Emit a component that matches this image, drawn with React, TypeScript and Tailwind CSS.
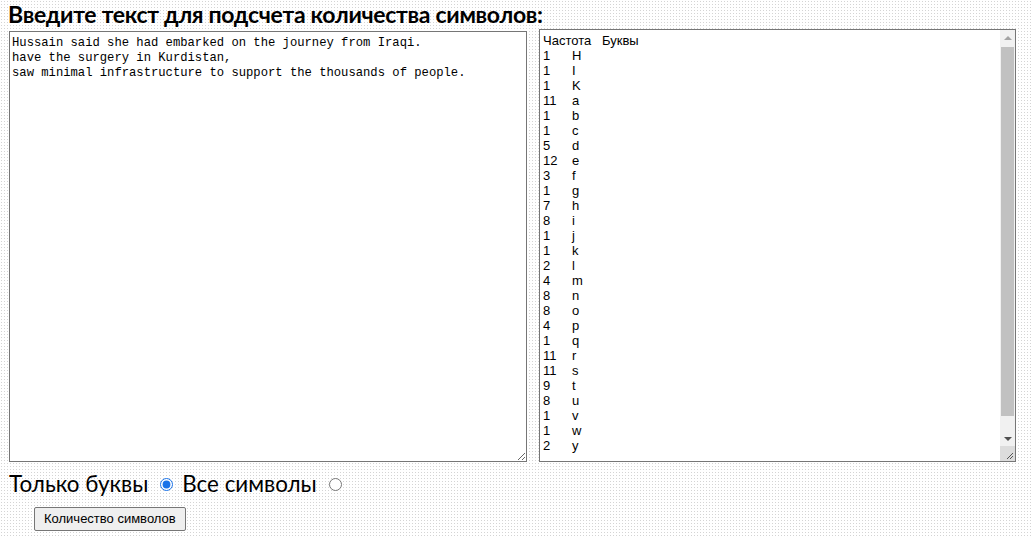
import React from "react";

const rows: [string, string][] = [
  ["1", "H"], ["1", "I"], ["1", "K"], ["11", "a"], ["1", "b"], ["1", "c"], ["5", "d"],
  ["12", "e"], ["3", "f"], ["1", "g"], ["7", "h"], ["8", "i"], ["1", "j"], ["1", "k"],
  ["2", "l"], ["4", "m"], ["8", "n"], ["8", "o"], ["4", "p"], ["1", "q"], ["11", "r"],
  ["11", "s"], ["9", "t"], ["8", "u"], ["1", "v"], ["1", "w"], ["2", "y"],
];

const text =
  "Hussain said she had embarked on the journey from Iraqi.\nhave the surgery in Kurdistan,\nsaw minimal infrastructure to support the thousands of people.";

export default function App() {
  return (
    <div className="w-[1031px] h-[537px] overflow-hidden bg-white bg-[radial-gradient(circle,#d4d4d4_0.6px,transparent_0.8px)] bg-[size:3px_3px] text-black">
      <h1 className="pl-[8px] text-[23px] leading-[29px] tracking-[-0.3px] font-bold font-['Lato','Noto_Sans',sans-serif]">
        Введите текст для подсчета количества символов:
      </h1>
      <div className="flex items-end gap-[12px] pl-[9px]">
        <textarea
          readOnly
          defaultValue={text}
          className="block w-[518px] h-[431px] border border-[#767676] bg-white px-[2px] pt-[4px] pb-[2px] font-['Liberation_Mono',monospace] text-[12.2px] leading-[15px] text-black outline-none"
          style={{ resize: "both" }}
        />
        <div className="flex w-[477px] h-[433px] border border-[#767676] bg-white">
          <div className="flex-1 pl-[3px] pt-[3px] font-['Liberation_Sans',Arial,sans-serif] text-[13px] leading-[15px]">
            <div className="flex">
              <span className="w-[59px]">Частота</span>
              <span>Буквы</span>
            </div>
            {rows.map(([n, l], i) => (
              <div key={i} className="flex">
                <span className="w-[29px]">{n}</span>
                <span>{l}</span>
              </div>
            ))}
          </div>
          <div className="flex w-[15px] flex-col bg-[#f1f1f1]">
            <div className="flex h-[15px] items-center justify-center">
              <div className="h-0 w-0 border-x-[4px] border-b-[4px] border-x-transparent border-b-[#a3a3a3]" />
            </div>
            <div className="mx-[1px] mt-[2px] h-[369px] bg-[#c1c1c1]" />
            <div className="flex-1" />
            <div className="flex h-[15px] items-center justify-center">
              <div className="h-0 w-0 border-x-[4px] border-t-[4px] border-x-transparent border-t-[#505050]" />
            </div>
            <div className="relative h-[15px] bg-[#dcdcdc]">
              <svg className="absolute right-[1px] bottom-[1px]" width="10" height="10" viewBox="0 0 10 10">
                <path d="M9 3 L3 9 M9 6 L6 9" stroke="#555" strokeWidth="1" />
              </svg>
            </div>
          </div>
        </div>
      </div>
      <div className="flex items-center pl-[9px] pt-[7px] text-[22.4px] leading-[30px] font-['Lato','Noto_Sans',sans-serif]">
        <span>Только буквы</span>
        <input type="radio" name="m" defaultChecked className="ml-[12px] mr-[9px] h-[13px] w-[13px] accent-[#1a73e8]" />
        <span>Все символы</span>
        <input type="radio" name="m" className="mx-[12px] h-[13px] w-[13px]" />
      </div>
      <div className="pl-[34px] pt-[6px]">
        <button className="h-[24px] rounded-[2px] border border-[#767676] bg-[#efefef] px-[9px] font-['Liberation_Sans',Arial,sans-serif] text-[13px] text-black">
          Количество символов
        </button>
      </div>
    </div>
  );
}
